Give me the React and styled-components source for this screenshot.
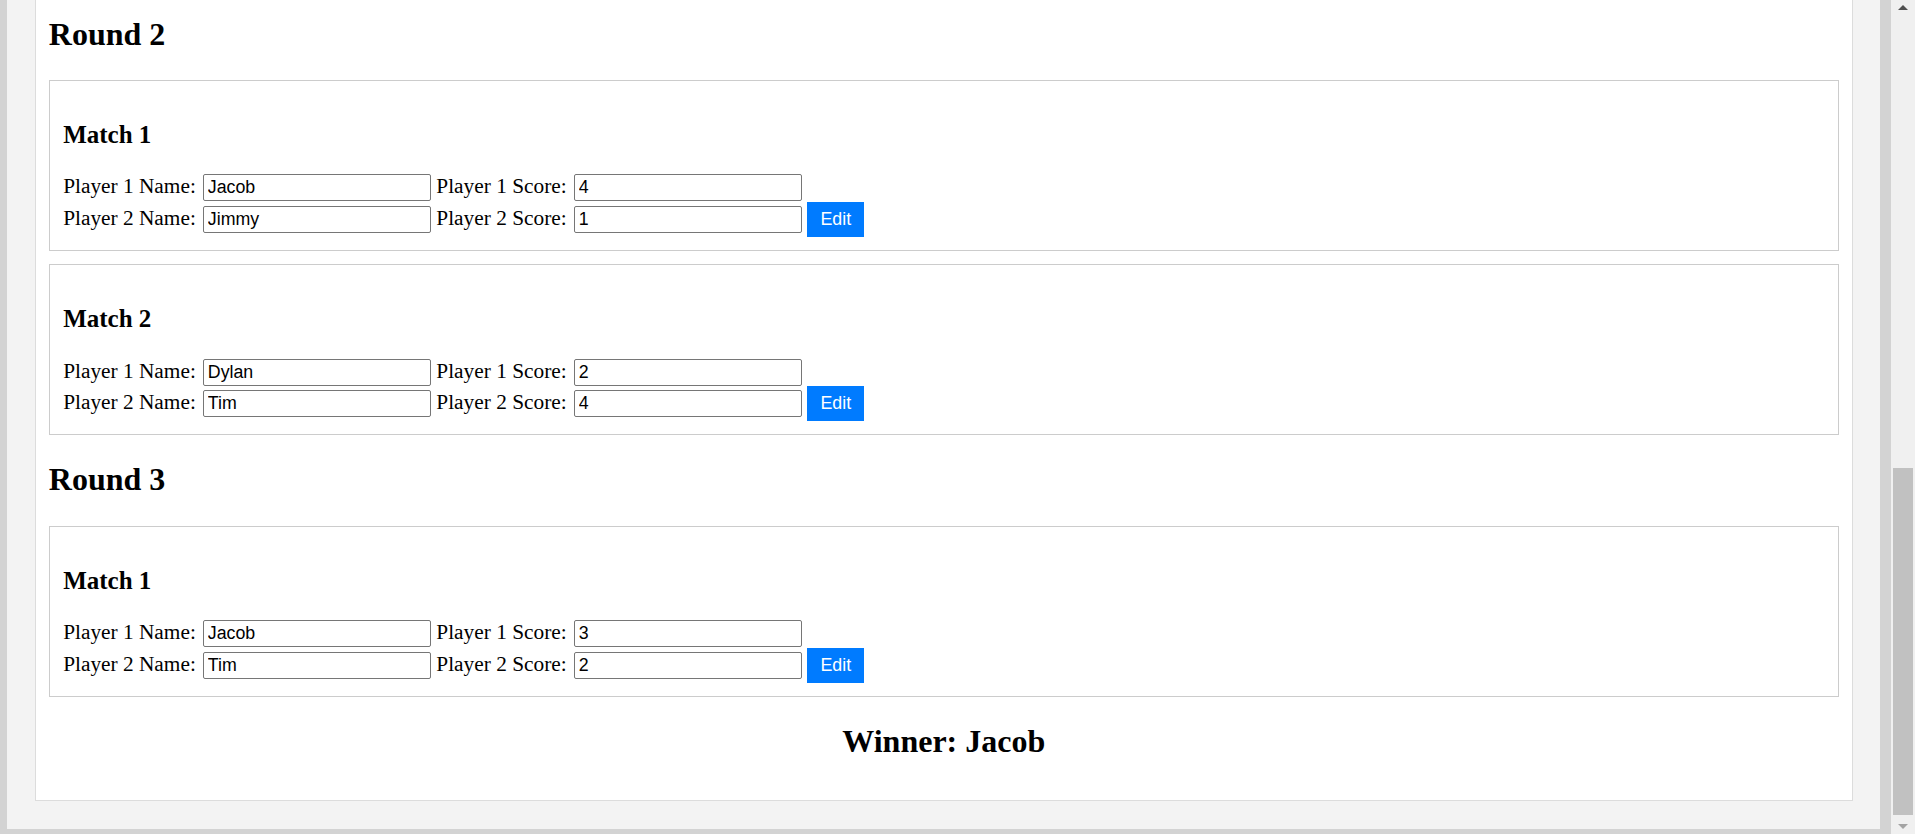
import React from 'react';
import styled, { createGlobalStyle } from 'styled-components';

const GlobalStyle = createGlobalStyle`
   html, body {
      margin: 0;
      padding: 0;
      overflow: hidden;
   }
   body {
      font-family: 'Liberation Serif', 'Times New Roman', serif;
      font-size: 21.33px;
      color: #000;
   }
`;

const rounds = [
   {
      title: 'Round 2',
      matches: [
         { p1: 'Jacob', s1: '4', p2: 'Jimmy', s2: '1' },
         { p1: 'Dylan', s1: '2', p2: 'Tim', s2: '4' },
      ],
   },
   {
      title: 'Round 3',
      matches: [{ p1: 'Jacob', s1: '3', p2: 'Tim', s2: '2' }],
   },
];

const Window = styled.div`
   display: flex;
   width: 1915px;
   height: 834px;
   overflow: hidden;
`;

const Frame = styled.div`
   flex: 1;
   background: #d3d3d3;
   padding: 0 11px 5px 7px;
   display: flex;
   min-width: 0;
`;

const Viewport = styled.div`
   flex: 1;
   background: #f3f3f3;
   padding: 0 27px 0 27.5px;
   overflow: hidden;
`;

const Panel = styled.main`
   background: #fff;
   border: 1px solid #dcdcdc;
   border-top: none;
   padding: 0 13.33px 13.33px;
   display: flow-root;
`;

const RoundTitle = styled.h2`
   font-size: 32px;
   font-weight: bold;
   line-height: 37px;
   margin: ${(p) => (p.first ? '15.5px' : '26px')} 0 ${(p) => (p.center ? '27px' : '27.5px')};
   text-align: ${(p) => (p.center ? 'center' : 'left')};
`;

const MatchBox = styled.section`
   border: 1px solid #cccccc;
   padding: 13.33px;
   margin-bottom: 13px;
`;

const MatchTitle = styled.h3`
   font-size: 25px;
   font-weight: bold;
   line-height: 28.7px;
   margin: 26.5px 0 23.5px;
`;

const Row = styled.div`
   display: flex;
   align-items: baseline;
   padding: ${(p) => (p.first ? '1.4px 0 0.7px' : '0')};
   line-height: 24.5px;
`;

const Label = styled.span`
   margin-right: 7px;
   white-space: nowrap;
`;

const Field = styled.input`
   box-sizing: border-box;
   width: 228px;
   height: 27px;
   margin: 0 5.5px 0 0;
   padding: 0 4px;
   border: 1px solid #767676;
   border-radius: 2px;
   background: #fff;
   color: #000;
   font-family: 'Liberation Sans', Arial, sans-serif;
   font-size: 17.78px;
`;

const EditButton = styled.button`
   box-sizing: border-box;
   height: 34.7px;
   padding: 0 13.33px;
   border: none;
   background: #007bff;
   color: #fff;
   font-family: 'Liberation Sans', Arial, sans-serif;
   font-size: 17.78px;
   cursor: pointer;
`;

const Scrollbar = styled.div`
   width: 24px;
   background: #f0f0f0;
   display: flex;
   flex-direction: column;
   align-items: center;
`;

const Arrow = styled.div`
   height: 17px;
   width: 100%;
   display: flex;
   align-items: ${(p) => (p.down ? 'flex-end' : 'flex-start')};
   justify-content: center;
   padding: ${(p) => (p.down ? '0 0 5px' : '5px 0 0')};
   box-sizing: border-box;
   &::before {
      content: '';
      border-left: 5.5px solid transparent;
      border-right: 5.5px solid transparent;
      ${(p) =>
         p.down
            ? 'border-top: 5.5px solid #a3a3a3;'
            : 'border-bottom: 5.5px solid #505050;'}
   }
`;

const Track = styled.div`
   flex: 1;
   width: 100%;
   display: flex;
   flex-direction: column;
   justify-content: flex-end;
   align-items: center;
   padding-bottom: 2px;
`;

const Thumb = styled.div`
   width: 20px;
   height: 347px;
   background: #c1c1c1;
`;

const Match = ({ index, match }) => (
   <MatchBox>
      <MatchTitle>Match {index + 1}</MatchTitle>
      <Row first>
         <Label>Player 1 Name:</Label>
         <Field type='text' defaultValue={match.p1} />
         <Label>Player 1 Score:</Label>
         <Field type='text' defaultValue={match.s1} />
      </Row>
      <Row>
         <Label>Player 2 Name:</Label>
         <Field type='text' defaultValue={match.p2} />
         <Label>Player 2 Score:</Label>
         <Field type='text' defaultValue={match.s2} />
         <EditButton>Edit</EditButton>
      </Row>
   </MatchBox>
);

const App = () => {
   return (
      <>
         <GlobalStyle />
         <Window>
            <Frame>
               <Viewport>
                  <Panel>
                     {rounds.map((round, r) => (
                        <div key={round.title}>
                           <RoundTitle first={r === 0}>{round.title}</RoundTitle>
                           {round.matches.map((m, i) => (
                              <Match key={i} index={i} match={m} />
                           ))}
                        </div>
                     ))}
                     <RoundTitle center>Winner: Jacob</RoundTitle>
                  </Panel>
               </Viewport>
            </Frame>
            <Scrollbar>
               <Arrow />
               <Track>
                  <Thumb />
               </Track>
               <Arrow down />
            </Scrollbar>
         </Window>
      </>
   );
};

export default App;
